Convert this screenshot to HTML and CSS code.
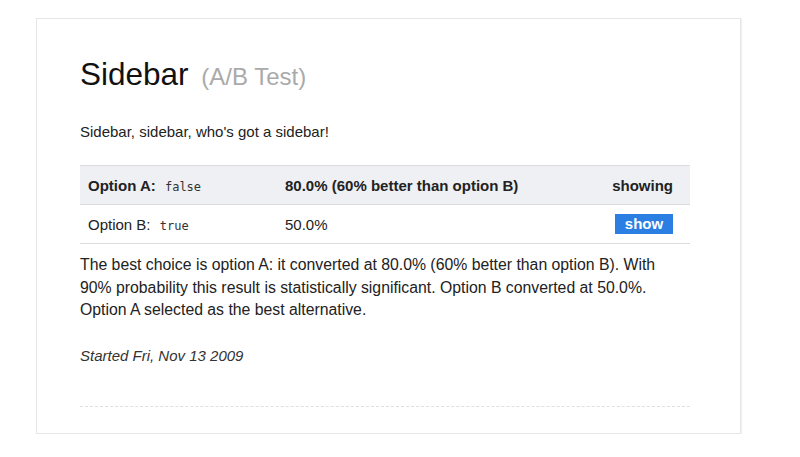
FILE: index.html
```html
<!DOCTYPE html>
<html>
<head>
<meta charset="utf-8">
<link rel="stylesheet" href="styles.css">
</head>
<body>
<div class="card">
  <h1 class="title">Sidebar <span class="sub">(A/B Test)</span></h1>
  <p class="desc">Sidebar, sidebar, who's got a sidebar!</p>
  <table class="ab">
    <tr class="winner">
      <td class="c1"><b>Option A:</b> <code>false</code></td>
      <td class="c2"><b>80.0% (60% better than option B)</b></td>
      <td class="c3"><b>showing</b></td>
    </tr>
    <tr>
      <td class="c1">Option B: <code>true</code></td>
      <td class="c2">50.0%</td>
      <td class="c3"><span class="btn">show</span></td>
    </tr>
  </table>
  <p class="summary">The best choice is option A: it converted at 80.0% (60% better than option B). With 90% probability this result is statistically significant. Option B converted at 50.0%. Option A selected as the best alternative.</p>
  <p class="started">Started Fri, Nov 13 2009</p>
  <div class="rule"></div>
</div>
</body>
</html>
```
FILE: styles.css
```css
html, body {
  margin: 0;
  padding: 0;
  background: #fff;
}
body {
  font-family: "Liberation Sans", Arial, sans-serif;
  color: #222;
  font-size: 15px;
}
.card {
  box-sizing: border-box;
  margin: 18px 0 0 36px;
  width: 705px;
  height: 416px;
  border: 1px solid #e6e6e6;
  box-shadow: 1px 1px 1px #f0f0f0;
  padding: 0 50px 0 43px;
}
.title {
  margin: 37px 0 0 0;
  font-size: 31.5px;
  line-height: 36px;
  font-weight: normal;
  color: #111;
}
.sub {
  font-size: 24px;
  color: #aaa;
  margin-left: 4px;
}
.desc {
  margin: 28px 0 0 0;
  line-height: 18px;
}
.ab {
  margin-top: 24px;
  width: 100%;
  border-collapse: collapse;
  border-top: 1px solid #dcdcdc;
}
.ab td {
  height: 38px;
  padding: 0;
  border-bottom: 1px solid #dcdcdc;
  vertical-align: middle;
}
.winner td {
  background: #eef0f4;
}
.c1 {
  width: 197px;
  padding-left: 8px !important;
}
.c3 {
  text-align: right;
  padding-right: 17px !important;
}
code {
  font-family: "DejaVu Sans Mono", monospace;
  font-size: 12px;
  margin-left: 5px;
  color: #333;
}
.btn {
  display: inline-block;
  background: #2b7fe2;
  color: #fff;
  font-weight: bold;
  padding: 0 9px;
  height: 20px;
  line-height: 20px;
  width: 40px;
  text-align: center;
}
.summary {
  margin: 10px 0 0 0;
  font-size: 15.8px;
  line-height: 22.5px;
  padding-right: 8px;
}
.started {
  margin: 25px 0 0 0;
  font-style: italic;
  color: #333;
}
.rule {
  margin-top: 42px;
  border-top: 1px dashed #e0e0e0;
}
```
